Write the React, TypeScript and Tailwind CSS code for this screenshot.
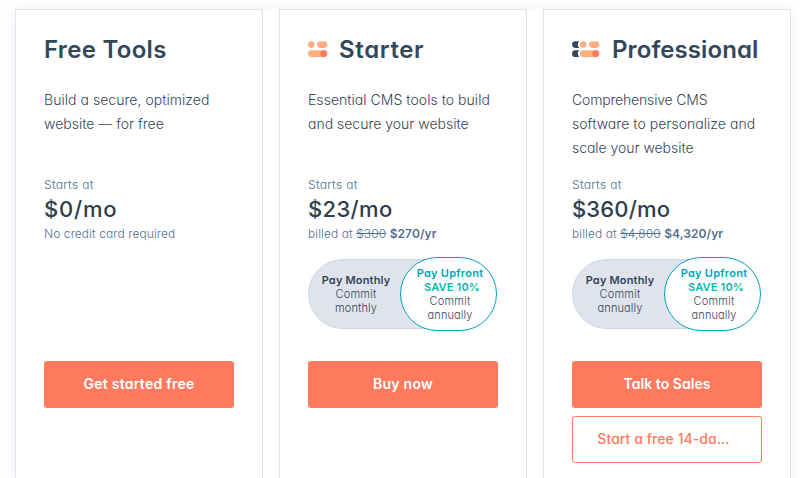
import type { ReactNode } from "react";

function Dots({ pro }: { pro?: boolean }) {
  return (
    <svg
      width={pro ? 28 : 20}
      height="17"
      viewBox={pro ? "-8 0 28 17" : "0 0 20 17"}
      className="shrink-0"
    >
      {pro && (
        <path
          d="M-4.6 0.3h3.8a4.6 4.6 0 0 0 0 6.6h-3.8a3.3 3.3 0 0 1 0-6.6zM-4.6 9.3h3.9a4.6 4.6 0 0 0 0 6.7h-3.9a3.35 3.35 0 0 1 0-6.7z"
          fill="#33475b"
        />
      )}
      <circle cx="3.3" cy="3.6" r="3.3" fill="#ffae80" />
      <rect x="9" y="0.3" width="10.3" height="6.6" rx="3.3" fill="#ffae80" />
      <rect x="0" y="9.2" width="19.3" height="6.8" rx="3.4" fill="#ffae80" />
      <circle cx="15.8" cy="12.6" r="3.4" fill="#ff7a5f" />
    </svg>
  );
}

function Toggle({ commit }: { commit: string }) {
  return (
    <div className="flex h-[74px] items-center text-center text-[11px] leading-[14px] text-[#33475b]">
      <div className="mr-[-36px] flex h-[70px] w-[128px] flex-col justify-center rounded-l-[35px] border border-[#cbd6e2] bg-[#dfe3eb] pr-[32px]">
        <span className="font-semibold tracking-[0.17px]">Pay Monthly</span>
        <span className="font-light tracking-[0.2px]">Commit</span>
        <span className="font-light tracking-[0.1px]">{commit}</span>
      </div>
      <div className="z-10 flex h-[74px] w-[97px] flex-col justify-center rounded-[37px] border border-[#00a4bd] bg-white pl-[3px]">
        <span className="font-semibold tracking-[0.25px] text-[#00a4bd]">Pay Upfront</span>
        <span className="pl-1 font-semibold tracking-[0.2px] text-[#00bda5]">SAVE 10%</span>
        <span className="font-light tracking-[0.2px]">Commit</span>
        <span className="font-light tracking-[0.1px]">annually</span>
      </div>
    </div>
  );
}

type CardProps = {
  icon?: ReactNode;
  title: ReactNode;
  lines: ReactNode;
  price: ReactNode;
  note: ReactNode;
  toggle?: ReactNode;
  children: ReactNode;
};

function Card({ icon, title, lines, price, note, toggle, children }: CardProps) {
  return (
    <section className="flex h-[480px] w-[248px] shrink-0 flex-col border border-[#dfe3eb] bg-white px-7 pt-[23px]">
      <h2 className="flex h-8 items-center text-[24px] leading-8 font-semibold whitespace-nowrap text-[#33475b]">
        {icon}
        {title}
      </h2>
      <p className="mt-[23px] flex h-[85px] flex-col text-[14px] leading-6 font-light whitespace-nowrap text-[#33475b]">
        {lines}
      </p>
      <div className="text-[12px] leading-6 font-light tracking-[0.33px] text-[#516f90]">Starts at</div>
      <div className="text-[22px] leading-[25px] font-medium text-[#2d3e50]">{price}</div>
      <div className="text-[12px] leading-6 font-light tracking-[0.08px] whitespace-nowrap text-[#516f90]">
        {note}
      </div>
      <div className="mt-[11px] h-[104px]">{toggle}</div>
      <div className="flex flex-col gap-2">{children}</div>
    </section>
  );
}

function Primary({ children }: { children: ReactNode }) {
  return (
    <button className="h-[47px] rounded-[3px] bg-[#ff7a5f] pb-0.5 text-[14px] font-semibold text-white">
      {children}
    </button>
  );
}

export default function App() {
  return (
    <main className="h-[478px] overflow-hidden bg-white pt-[9px] pl-[15px] font-[Inter,sans-serif] [font-feature-settings:'cv11']">
      <div className="flex w-[776px] gap-4 bg-white shadow-[0_0_12px_rgba(203,214,226,0.35)]">
        <Card
          title={<span className="pt-0.5 tracking-[0.3px]">Free Tools</span>}
          lines={
            <>
              <span className="tracking-[0.04px]">Build a secure, optimized</span>
              <span>website — for free</span>
            </>
          }
          price={<span className="tracking-[0.8px]">$0/mo</span>}
          note="No credit card required"
        >
          <Primary>
            <span className="tracking-[0.25px]">Get started free</span>
          </Primary>
        </Card>
        <Card
          icon={<Dots />}
          title={<span className="pt-0.5 pl-[11px] tracking-[0.65px]">Starter</span>}
          lines={
            <>
              <span className="tracking-[0.04px]">Essential CMS tools to build</span>
              <span>and secure your website</span>
            </>
          }
          price={<span className="tracking-[0.35px]">$23/mo</span>}
          note={
            <>
              billed at <s>$300</s> <b className="font-semibold">$270/yr</b>
            </>
          }
          toggle={<Toggle commit="monthly" />}
        >
          <Primary>
            <span className="tracking-[0.28px]">Buy now</span>
          </Primary>
        </Card>
        <Card
          icon={<Dots pro />}
          title={<span className="pt-0.5 pl-3 tracking-[0.1px]">Professional</span>}
          lines={
            <>
              <span className="tracking-[-0.17px]">Comprehensive CMS</span>
              <span className="tracking-[0.04px]">software to personalize and</span>
              <span className="tracking-[-0.04px]">scale your website</span>
            </>
          }
          price={<span className="tracking-[0.15px]">$360/mo</span>}
          note={
            <>
              billed at <s>$4,800</s> <b className="font-semibold">$4,320/yr</b>
            </>
          }
          toggle={<Toggle commit="annually" />}
        >
          <Primary>
            <span className="tracking-[0.04px]">Talk to Sales</span>
          </Primary>
          <button className="h-[47px] rounded-[3px] border border-[#ff7a5f] pr-[7px] pb-0.5 text-[14px] font-medium tracking-[0.06px] text-[#ff7a5f]">
            Start a free 14-da...
          </button>
        </Card>
      </div>
    </main>
  );
}
